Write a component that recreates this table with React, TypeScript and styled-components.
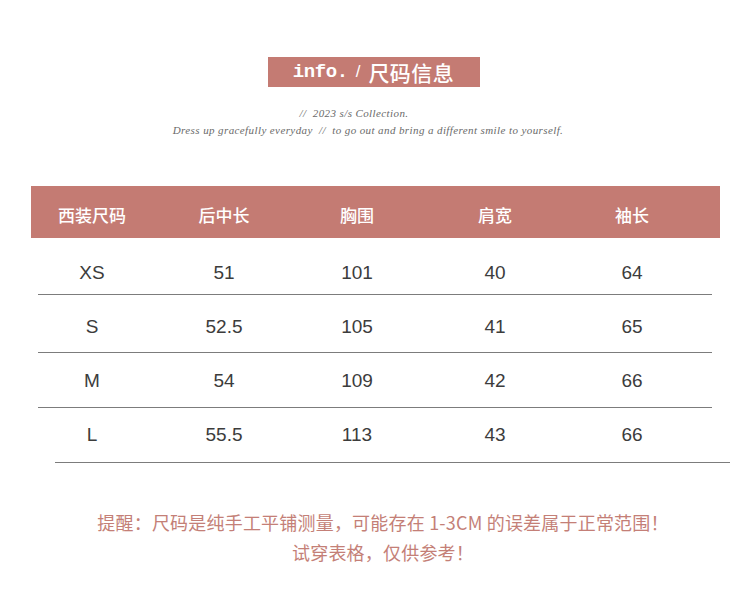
import React from 'react';
import styled, { createGlobalStyle } from 'styled-components';

const GlobalStyle = createGlobalStyle`
    html, body {
        margin: 0;
        padding: 0;
        background: #ffffff;
    }
    body {
        font-family: "Noto Sans CJK SC", "Noto Sans", sans-serif;
    }
`

const Page = styled.div`
    width: 750px;
    height: 592px;
    padding-top: 57px;
    box-sizing: border-box;
    display: flex;
    flex-direction: column;
    align-items: center;
    overflow: hidden;
`

const TitleBox = styled.div`
    height: 30px;
    width: 212px;
    margin-left: -3px;
    background: #c47b73;
    display: flex;
    align-items: center;
    justify-content: center;
    gap: 8px;
    color: #ffffff;
`

const TitleLatin = styled.span`
    font-family: "Liberation Mono", "Courier New", monospace;
    font-weight: bold;
    font-size: 19px;
    letter-spacing: -0.4px;
`

const TitleSlash = styled.span`
    font-family: "Liberation Sans", Arial, sans-serif;
    font-size: 17px;
`

const TitleCjk = styled.span`
    font-family: "Noto Sans CJK SC", sans-serif;
    font-weight: 500;
    font-size: 21px;
    letter-spacing: 0.5px;
`

const Tagline = styled.div`
    margin-top: 18px;
    margin-right: 14px;
    display: flex;
    flex-direction: column;
    align-items: center;
    font-family: "Liberation Serif", "Times New Roman", serif;
    font-style: italic;
    font-size: 11px;
    letter-spacing: 0.4px;
    line-height: 17px;
    color: #6a6a6a;
`

const TagLine = styled.div<{ $shift?: number }>`
    white-space: pre;
    margin-right: ${(props) => props.$shift ? `${props.$shift}px` : '0'};
`

const Table = styled.div`
    width: 689px;
    margin-top: 47px;
    margin-left: 1px;
`

const Cols = '122px 142px 124px 152px 122px'

const HeadRow = styled.div`
    height: 52px;
    background: #c47b73;
    display: grid;
    grid-template-columns: ${Cols};
    align-items: center;
    padding-top: 4px;
    box-sizing: border-box;
    color: #ffffff;
    font-family: "Noto Sans CJK SC", sans-serif;
    font-size: 17px;
    font-weight: 500;
`

const HeadCell = styled.div`
    text-align: center;
    white-space: nowrap;
`

const Row = styled.div<{ $pad: number; $h: number }>`
    height: ${(props) => props.$h}px;
    padding-top: ${(props) => props.$pad}px;
    box-sizing: border-box;
    display: grid;
    grid-template-columns: ${Cols};
    align-items: start;
    font-family: "Liberation Sans", Arial, sans-serif;
    font-size: 19px;
    line-height: 24px;
    color: #3c3c3c;
`

const Cell = styled.div`
    text-align: center;
`

const Divider = styled.div<{ $left: number; $width: number }>`
    height: 1px;
    background: #7c7c7c;
    margin-left: ${(props) => props.$left}px;
    width: ${(props) => props.$width}px;
`

const Note = styled.div`
    margin-top: 44px;
    margin-left: 16px;
    display: flex;
    flex-direction: column;
    align-items: center;
    font-family: "Noto Sans CJK SC", sans-serif;
    font-size: 18px;
    line-height: 30px;
    color: #c47f77;
    letter-spacing: 0.2px;
`

const NoteLine = styled.div`
    white-space: pre;
`

const headers = ['西装尺码', '后中长', '胸围', '肩宽', '袖长']

const rows = [
    { cells: ['XS', '51', '101', '40', '64'], pad: 23, h: 56, left: 7, width: 674 },
    { cells: ['S', '52.5', '105', '41', '65'], pad: 20, h: 57, left: 7, width: 674 },
    { cells: ['M', '54', '109', '42', '66'], pad: 16, h: 54, left: 7, width: 674 },
    { cells: ['L', '55.5', '113', '43', '66'], pad: 15, h: 54, left: 24, width: 675 },
]

export default function App() {
    return (
        <>
            <GlobalStyle />
            <Page>
                <TitleBox>
                    <TitleLatin>info.</TitleLatin>
                    <TitleSlash>/</TitleSlash>
                    <TitleCjk>尺码信息</TitleCjk>
                </TitleBox>

                <Tagline>
                    <TagLine $shift={28}>{'//  2023 s/s Collection.'}</TagLine>
                    <TagLine>{'Dress up gracefully everyday  //  to go out and bring a different smile to yourself.'}</TagLine>
                </Tagline>

                <Table>
                    <HeadRow>
                        {headers.map((h) => (
                            <HeadCell key={h}>{h}</HeadCell>
                        ))}
                    </HeadRow>
                    {rows.map((r) => (
                        <React.Fragment key={r.cells[0]}>
                            <Row $pad={r.pad} $h={r.h}>
                                {r.cells.map((c, i) => (
                                    <Cell key={i}>{c}</Cell>
                                ))}
                            </Row>
                            <Divider $left={r.left} $width={r.width} />
                        </React.Fragment>
                    ))}
                </Table>

                <Note>
                    <NoteLine>提醒：尺码是纯手工平铺测量，可能存在 1-3CM 的误差属于正常范围！</NoteLine>
                    <NoteLine>试穿表格，仅供参考！</NoteLine>
                </Note>
            </Page>
        </>
    )
}
